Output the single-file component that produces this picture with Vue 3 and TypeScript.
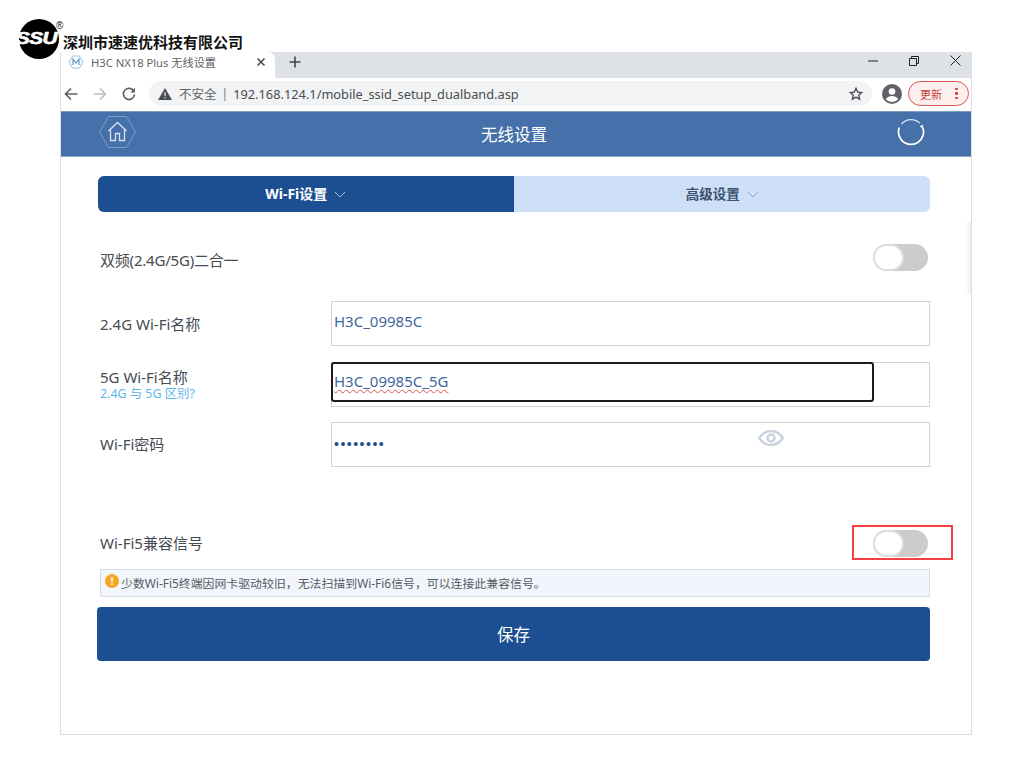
<script setup lang="ts">
const fields = [
  { label: '2.4G Wi-Fi名称', value: 'H3C_09985C' },
];
const dots = '••••••••';
</script>

<template>
  <div class="page">
    <div class="brand">
      <div class="logo"><span class="logo-text">SSU</span><span class="reg">®</span></div>
      <div class="brand-name">深圳市速速优科技有限公司</div>
    </div>

    <div class="window">
      <div class="tabbar">
        <div class="tab">
          <svg class="favicon" width="16" height="16" viewBox="0 0 16 16">
            <path d="M4.500 2h7L15 8l-3.500 6h-7L1 8z" fill="none" stroke="#8cc4e8" stroke-width="1" />
            <path d="M5 11V5.200L8 9l3-3.800V11" fill="none" stroke="#5f8fc0" stroke-width="1.100" />
          </svg>
          <span class="tab-title">H3C NX18 Plus 无线设置</span>
          <svg class="tab-close" width="10" height="10" viewBox="0 0 10 10">
            <path d="M1.500 1.500l7 7M8.500 1.500l-7 7" stroke="#45484d" stroke-width="1.500" />
          </svg>
        </div>
        <svg class="new-tab" width="12" height="12" viewBox="0 0 12 12">
          <path d="M6 .5v11M.5 6h11" stroke="#45484d" stroke-width="1.600" />
        </svg>
        <div class="win-controls">
          <svg width="10" height="10" viewBox="0 0 10 10"><path d="M0 5h10" stroke="#222" stroke-width="1" /></svg>
          <svg width="10" height="10" viewBox="0 0 10 10">
            <path d="M.5 2.500h7v7h-7zM2.500 2.500v-2h7v7h-2" fill="none" stroke="#222" stroke-width="1" />
          </svg>
          <svg width="11" height="11" viewBox="0 0 11 11"><path d="M.5.5l10 10M10.500.5l-10 10" stroke="#222" stroke-width="1" /></svg>
        </div>
      </div>

      <div class="toolbar">
        <svg class="nav" width="14" height="14" viewBox="0 0 14 14">
          <path d="M13.500 7H1.500M7 1.500L1.500 7 7 12.500" fill="none" stroke="#5f6368" stroke-width="1.700" />
        </svg>
        <svg class="nav" width="14" height="14" viewBox="0 0 14 14">
          <path d="M.5 7h12M7 1.500L12.500 7 7 12.500" fill="none" stroke="#bcc0c5" stroke-width="1.700" />
        </svg>
        <svg class="nav" width="14" height="14" viewBox="0 0 14 14">
          <path d="M12 4.300A5.600 5.600 0 1 0 12.600 7.500" fill="none" stroke="#5f6368" stroke-width="1.700" />
          <path d="M13 .8V5.500H8.300z" fill="#5f6368" />
        </svg>
        <div class="omnibox">
          <svg width="14" height="12" viewBox="0 0 14 12">
            <path d="M7 0l7 12H0z" fill="#4a4d51" />
            <path d="M6.400 4h1.200v4H6.400zM6.400 9h1.200v1.200H6.400z" fill="#f1f3f4" />
          </svg>
          <span class="insecure">不安全</span>
          <span class="sep">|</span>
          <span class="url">192.168.124.1/mobile_ssid_setup_dualband.asp</span>
          <svg class="star" width="14" height="14" viewBox="0 0 14 14">
            <path d="M7 1.300l1.700 3.800 4.100.4-3.100 2.700.9 4L7 10.100l-3.600 2.100.9-4L1.200 5.500l4.100-.4z" fill="none" stroke="#45484d" stroke-width="1.300" />
          </svg>
        </div>
        <svg class="avatar" width="20" height="20" viewBox="0 0 20 20">
          <circle cx="10" cy="10" r="10" fill="#5f6368" />
          <circle cx="10" cy="7.500" r="3.300" fill="#fff" />
          <path d="M3.800 15.200c1.400-2.200 3.700-3.200 6.200-3.200s4.800 1 6.200 3.200A8 8 0 0 1 10 18a8 8 0 0 1-6.200-2.800z" fill="#fff" />
        </svg>
        <div class="update">
          <span>更新</span>
          <i class="menu-dots"><b></b><b></b><b></b></i>
        </div>
      </div>

      <header class="app-header">
        <svg class="home" width="37" height="32" viewBox="0 0 37 32">
          <path d="M9.500 .5h18l9 15.500-9 15.500h-18L.5 16z" fill="none" stroke="#7d9fcb" stroke-width="1" />
          <path d="M9.500 15L18.500 6.500 27.500 15M11.500 13.500V24.500h5v-7h4v7h5V13.500" fill="none" stroke="#d6e2f1" stroke-width="1.300" />
        </svg>
        <h1>无线设置</h1>
        <svg class="spinner" width="28" height="28" viewBox="0 0 28 28">
          <path d="M4.500 6A12.500 12.500 0 0 1 23 5.300" fill="none" stroke="#d9e3f0" stroke-width="1.200" />
          <path d="M25.700 9.500A12.500 12.500 0 1 1 2.300 9.500" fill="none" stroke="#fff" stroke-width="1.700" />
          <path d="M25.900 6.500L25.800 10.500 22.800 8.500z" fill="#fff" />
        </svg>
      </header>

      <main class="form">
        <div class="seg">
          <div class="seg-item on">Wi-Fi设置<svg class="chev" width="12" height="7" viewBox="0 0 12 7"><path d="M1 1l5 5 5-5" fill="none" stroke="#a9bfdc" stroke-width="1" /></svg></div>
          <div class="seg-item">高级设置<svg class="chev" width="12" height="7" viewBox="0 0 12 7"><path d="M1 1l5 5 5-5" fill="none" stroke="#8fa8c8" stroke-width="1" /></svg></div>
        </div>

        <div class="switch-row first">
          <span class="label">双频(2.4G/5G)二合一</span>
          <span class="toggle"><i></i></span>
        </div>

        <div v-for="f in fields" :key="f.label" class="field-row row1">
          <span class="label">{{ f.label }}</span>
          <div class="field"><span class="val raised">{{ f.value }}</span></div>
        </div>

        <div class="field-row row2">
          <div class="label-stack">
            <span class="label">5G Wi-Fi名称</span>
            <span class="hint">2.4G 与 5G 区别?</span>
          </div>
          <div class="field">
            <span class="val raised low"><span class="spell">H3C_09985C_5G</span></span>
            <div class="focus"></div>
          </div>
        </div>

        <div class="field-row row3">
          <span class="label">Wi-Fi密码</span>
          <div class="field">
            <span class="val pw">{{ dots }}</span>
            <svg class="eye" width="26" height="16" viewBox="0 0 26 16">
              <path d="M1.200 8c3-4.500 7-7 11.800-7s8.800 2.500 11.800 7c-3 4.500-7 7-11.800 7S4.200 12.500 1.200 8z" fill="none" stroke="#c9d3df" stroke-width="2.400" />
              <circle cx="13" cy="8" r="3.500" fill="none" stroke="#c9d3df" stroke-width="2.400" />
            </svg>
          </div>
        </div>

        <div class="switch-row compat">
          <span class="label">Wi-Fi5兼容信号</span>
          <span class="toggle"><i></i><em class="callout"></em></span>
        </div>

        <div class="notice">
          <span class="warn">!</span>
          <span>少数Wi-Fi5终端因网卡驱动较旧，无法扫描到Wi-Fi6信号，可以连接此兼容信号。</span>
        </div>

        <button class="save" type="button">保存</button>
      </main>

      <div class="edge-shadow"></div>
    </div>
  </div>
</template>

<style scoped>
.page {
  position: relative;
  width: 1024px;
  height: 768px;
  overflow: hidden;
  background: #fff;
  font-family: "Noto Sans", "Noto Sans CJK SC", sans-serif;
  color: #3f4650;
}
.brand {
  display: flex;
  align-items: flex-start;
  height: 52px;
  padding-left: 19px;
}
.logo {
  position: relative;
  flex: none;
  width: 40px;
  height: 40px;
  margin-top: 19px;
  border-radius: 50%;
  background: #000;
  text-align: center;
}
.logo-text {
  display: block;
  font: italic 700 16px/40px "Liberation Sans", sans-serif;
  letter-spacing: -0.500px;
  color: #fff;
  -webkit-text-stroke: 0.600px #fff;
  transform: scaleX(1.300);
  margin-left: -5px;
}
.reg {
  position: absolute;
  left: 37px;
  top: 1px;
  font: 10px/12px "Liberation Sans", sans-serif;
  color: #111;
}
.brand-name {
  margin: 32px 0 0 4px;
  font-size: 15px;
  line-height: 20px;
  font-weight: 700;
  color: #111;
  white-space: nowrap;
  position: relative;
  z-index: 1;
}
.window {
  position: relative;
  box-sizing: border-box;
  width: 912px;
  height: 683px;
  margin-left: 60px;
  border: 1px solid #dcdfe3;
  border-top: 0;
  background: #fff;
}
.tabbar {
  display: flex;
  align-items: flex-start;
  height: 26px;
  background: #dee1e6;
}
.tab {
  display: flex;
  align-items: center;
  width: 214px;
  height: 26px;
  box-sizing: border-box;
  padding: 0 0 6px 7px;
  background: #fff;
  border-top-right-radius: 7px;
}
.favicon { flex: none; }
.tab-title {
  margin-left: 7px;
  font-size: 11.200px;
  color: #5f6368;
  white-space: nowrap;
}
.tab-close { margin-left: auto; margin-right: 9px; }
.new-tab { margin: 4px 0 0 14px; }
.win-controls {
  display: flex;
  align-items: center;
  gap: 31px;
  margin: 3px 10px 0 auto;
}
.toolbar {
  display: flex;
  align-items: center;
  box-sizing: border-box;
  height: 33px;
  background: #fff;
  padding: 0 0 2px 3px;
}
.nav { flex: none; margin-right: 15px; }
.omnibox {
  display: flex;
  align-items: center;
  flex: none;
  width: 723px;
  height: 25px;
  box-sizing: border-box;
  margin-left: -2px;
  padding: 0 9px;
  border-radius: 13px;
  background: #f1f3f4;
}
.insecure { margin-left: 7px; font-size: 12.500px; color: #5f6368; }
.sep { margin: 0 5px; font-size: 12px; color: #777; }
.url { font-size: 12.800px; color: #4a4d51; white-space: nowrap; }
.star { margin-left: auto; }
.avatar { flex: none; margin-left: 10px; }
.update {
  display: flex;
  align-items: center;
  box-sizing: border-box;
  width: 61px;
  height: 25px;
  margin-left: 6px;
  padding-left: 11px;
  border: 1px solid #d65a55;
  border-radius: 13px;
  background: #fcefed;
  color: #c5443e;
  font-size: 11px;
}
.menu-dots {
  display: flex;
  flex-direction: column;
  gap: 2px;
  margin-left: 13px;
}
.menu-dots b {
  width: 2.500px;
  height: 2.500px;
  border-radius: 50%;
  background: #d03a35;
}
.app-header {
  position: relative;
  display: flex;
  align-items: center;
  justify-content: center;
  height: 46px;
  padding-right: 4px;
  background: #4670a9;
  border-bottom: 1px solid #8ca4c4;
  border-top: 1px solid #7f9cc2;
  box-sizing: border-box;
}
.app-header h1 {
  margin: 0;
  font-size: 16.500px;
  font-weight: 400;
  color: #fff;
}
.home { position: absolute; left: 38px; top: 4px; }
.spinner { position: absolute; left: 836px; top: 6px; }
.form {
  display: flex;
  flex-direction: column;
  margin: 0 41px 0 37px;
}
.seg {
  display: flex;
  height: 36px;
  margin-top: 19px;
  border-radius: 6px;
  overflow: hidden;
  background: #cde0f8;
}
.seg-item {
  flex: 1;
  display: flex;
  align-items: center;
  justify-content: center;
  padding-bottom: 3px;
  font-size: 13.500px;
  font-weight: 700;
  color: #3c5170;
}
.seg-item.on { background: #1c4f91; color: #fff; margin-right: 1px; font-size: 14px; }
.chev { margin-left: 7px; margin-top: 4px; }
.label { font-size: 15px; line-height: 20px; color: #454b52; white-space: nowrap; }
.switch-row {
  display: flex;
  align-items: center;
  justify-content: space-between;
  height: 27px;
  padding: 0 2px;
}
.switch-row.first { margin-top: 32px; }
.switch-row.first .label { position: relative; top: 2px; letter-spacing: -0.200px; }
.switch-row.compat { margin-top: 63px; }
.switch-row.compat .label { position: relative; top: -1px; }
.toggle {
  position: relative;
  display: block;
  width: 55px;
  height: 27px;
  border-radius: 14px;
  background: #cccccc;
}
.toggle i {
  position: absolute;
  left: 0;
  top: 0;
  box-sizing: border-box;
  width: 31px;
  height: 27px;
  border-radius: 14px;
  background: #fff;
  border: 2px solid #dedede;
}
.callout {
  position: absolute;
  left: -21px;
  top: -5px;
  box-sizing: border-box;
  width: 101px;
  height: 35px;
  border: 2px solid #f44040;
}
.field-row {
  display: grid;
  grid-template-columns: 231px 1fr;
  align-items: center;
  padding-left: 2px;
  height: 45px;
}
.row1 { margin-top: 30px; }
.row2 { margin-top: 16px; }
.row3 { margin-top: 15px; }
.row3 .label { position: relative; top: -1px; }
.label-stack { display: flex; flex-direction: column; margin-top: -3px; }
.hint { font-size: 12.400px; line-height: 13px; color: #5cb8e6; }
.field {
  position: relative;
  box-sizing: border-box;
  height: 45px;
  border: 1px solid #d0d2d5;
  padding-left: 2px;
  display: flex;
  align-items: center;
}
.val { font-size: 15px; color: #44659c; white-space: nowrap; }
.raised { position: relative; top: -3px; }
.raised.low { top: -4px; }
.spell { text-decoration: underline wavy #e0504a 1px; text-underline-offset: 2px; }
.pw {
  font: 14px "Liberation Sans", sans-serif;
  color: #1c4f91;
  letter-spacing: 1.500px;
  position: relative;
  top: -1px;
}
.focus {
  position: absolute;
  left: -1px;
  top: -1px;
  box-sizing: border-box;
  width: 543px;
  height: 40px;
  border: 2px solid #1c1c1c;
  border-radius: 3px;
}
.eye { position: absolute; left: 426px; top: 7px; }
.notice {
  display: flex;
  align-items: center;
  box-sizing: border-box;
  height: 28px;
  margin: 12px 0 0 2px;
  padding: 0 0 1px 4px;
  background: #f2f6fc;
  border: 1px solid #d8dce3;
  font-size: 11.900px;
  color: #555b63;
  white-space: nowrap;
}
.warn {
  flex: none;
  width: 14px;
  height: 14px;
  margin-right: 2px;
  margin-top: -3px;
  border-radius: 50%;
  background: #f5a623;
  color: #fff;
  font: 700 11px/14px "Liberation Sans", sans-serif;
  text-align: center;
}
.save {
  height: 54px;
  margin: 10px 0 0 -1px;
  padding: 0;
  border: 0;
  border-radius: 4px;
  background: #1c4f91;
  color: #fff;
  font-family: inherit;
  font-size: 16.500px;
}
.edge-shadow {
  position: absolute;
  right: 0;
  top: 170px;
  width: 5px;
  height: 72px;
  background: linear-gradient(to right, #fff, #eeeeee);
}
</style>
